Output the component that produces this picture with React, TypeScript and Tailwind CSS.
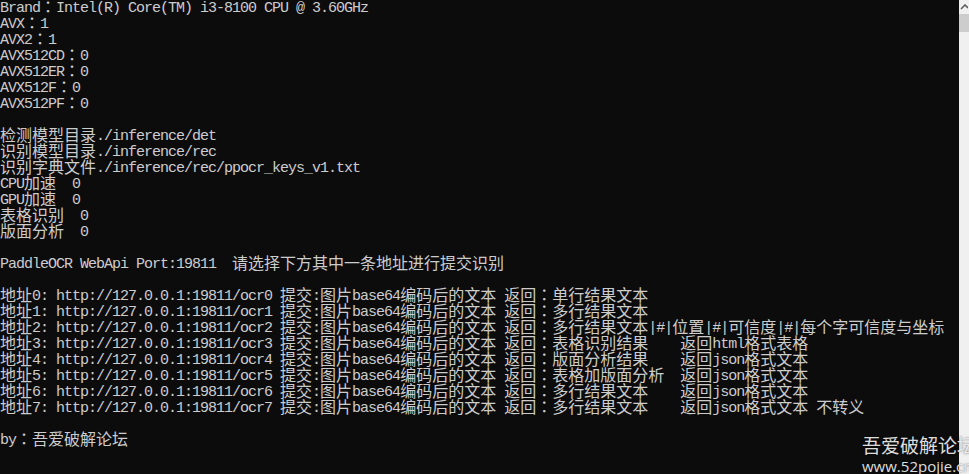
import React from "react";

// console output, one string per row (blank rows are "")
const lines: string[] = [
  "Brand：Intel(R) Core(TM) i3-8100 CPU @ 3.60GHz",
  "AVX：1",
  "AVX2：1",
  "AVX512CD：0",
  "AVX512ER：0",
  "AVX512F：0",
  "AVX512PF：0",
  "",
  "检测模型目录./inference/det",
  "识别模型目录./inference/rec",
  "识别字典文件./inference/rec/ppocr_keys_v1.txt",
  "CPU加速  0",
  "GPU加速  0",
  "表格识别  0",
  "版面分析  0",
  "",
  "PaddleOCR WebApi Port:19811  请选择下方其中一条地址进行提交识别",
  "",
  "地址0: http://127.0.0.1:19811/ocr0 提交:图片base64编码后的文本 返回：单行结果文本",
  "地址1: http://127.0.0.1:19811/ocr1 提交:图片base64编码后的文本 返回：多行结果文本",
  "地址2: http://127.0.0.1:19811/ocr2 提交:图片base64编码后的文本 返回：多行结果文本|#|位置|#|可信度|#|每个字可信度与坐标",
  "地址3: http://127.0.0.1:19811/ocr3 提交:图片base64编码后的文本 返回：表格识别结果    返回html格式表格",
  "地址4: http://127.0.0.1:19811/ocr4 提交:图片base64编码后的文本 返回：版面分析结果    返回json格式文本",
  "地址5: http://127.0.0.1:19811/ocr5 提交:图片base64编码后的文本 返回：表格加版面分析  返回json格式文本",
  "地址6: http://127.0.0.1:19811/ocr6 提交:图片base64编码后的文本 返回：多行结果文本    返回json格式文本",
  "地址7: http://127.0.0.1:19811/ocr7 提交:图片base64编码后的文本 返回：多行结果文本    返回json格式文本 不转义",
  "",
  "by：吾爱破解论坛",
];

// split a row into ascii / wide runs so each cell keeps the console grid (8px / 16px)
const ConsoleLine = ({ text }: { text: string }) => {
  const runs = text.match(/[\x00-\x7f]+|：|[^\x00-\x7f：]+/g) ?? [];
  return (
    <div className="h-4 leading-4 whitespace-pre">
      {runs.map((run, i) => {
        if (/^[\x00-\x7f]/.test(run))
          return (
            <span
              key={i}
              className="text-[15px] tracking-[-1px] align-[1px] font-['Liberation_Mono',monospace]"
            >
              {run}
            </span>
          );
        if (run === "：")
          return (
            <span key={i} className="text-[16px] font-['Noto_Sans_CJK_TC',sans-serif]">
              {run}
            </span>
          );
        return (
          <span key={i} className="text-[16px] font-['Noto_Sans_CJK_SC',sans-serif]">
            {run}
          </span>
        );
      })}
      {text === "" && " "}
    </div>
  );
};

const App = () => {
  return (
    <div className="relative w-[969px] h-[474px] overflow-hidden bg-[#0c0c0c] flex">
      <div className="flex-1 -mt-[2px] text-[#cccccc]">
        {lines.map((line, index) => (
          <ConsoleLine key={index} text={line} />
        ))}
      </div>

      {/* scrollbar */}
      <div className="w-[10px] h-full bg-[#f0f0f0] flex flex-col">
        <div className="h-[14px] flex items-center justify-end pr-[1px]">
          <svg width="8" height="6" viewBox="0 0 8 6">
            <path d="M1 5 L5 1 L8 4" stroke="#606060" strokeWidth="1.6" fill="none" />
          </svg>
        </div>
        <div className="h-[18px] bg-[#cdcdcd]" />
      </div>

      {/* watermark */}
      <div className="absolute left-[862px] top-[433px] flex flex-col text-[#e9e9e9] opacity-95 [text-shadow:0_0_2px_rgba(0,0,0,0.6)]">
        <span className="text-[19px] leading-[24px] font-['Noto_Sans_CJK_SC',sans-serif] whitespace-nowrap">
          吾爱破解论坛
        </span>
        <span className="text-[15px] leading-[18px] font-['Open_Sans',sans-serif] whitespace-nowrap">
          www.52pojie.cn
        </span>
      </div>
    </div>
  );
};

export default App;
